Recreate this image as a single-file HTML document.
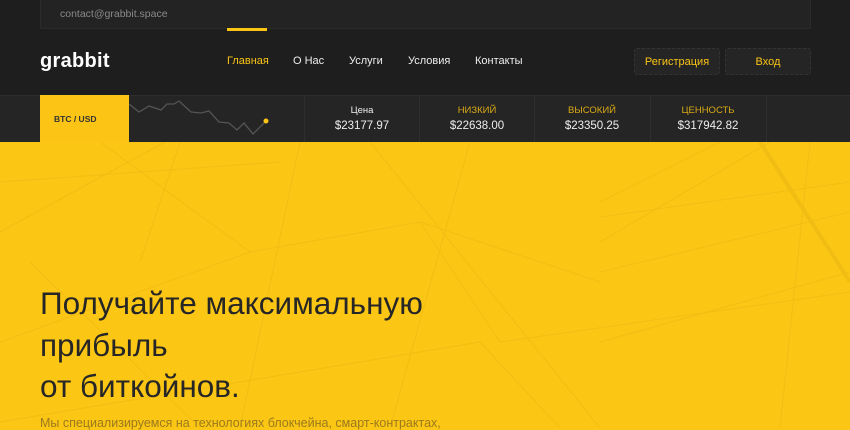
<!DOCTYPE html>
<html><head><meta charset="utf-8"><style>
*{margin:0;padding:0;box-sizing:border-box}
html,body{background:#fcc615}
body{width:850px;height:428px;overflow:hidden;font-family:"Liberation Sans",sans-serif;position:relative}
.dark{position:absolute;left:0;top:0;width:850px;height:142px;background:#1e1e1e}
.top{position:absolute;left:40px;top:0;width:771px;height:29px;background:#232323;border:1px solid #2b2b2b;border-top:none}
.top span{position:absolute;left:19px;top:8px;font-size:10.5px;color:#8a8a8a}
.ul{position:absolute;left:227px;top:28px;width:40px;height:3px;background:#fcc515}
.logo{position:absolute;left:40px;top:50px;font-size:20px;font-weight:bold;color:#fff;letter-spacing:.3px}
.nav{position:absolute;top:55px;font-size:11px;color:#eee}
.btn{position:absolute;top:48px;height:27px;background:#252525;border:1px dashed #333;border-radius:3px;color:#fcc515;font-size:11px;text-align:center;line-height:26px}
.tick{position:absolute;left:0;top:95px;width:850px;height:47px;background:#252525;border-top:1px solid #2e2e2e}
.btc{position:absolute;left:40px;top:95px;width:89px;height:47px;background:#fcc515;font-size:8.5px;font-weight:bold;color:#333;padding:19px 0 0 14px}
.cell{position:absolute;top:96px;height:46px;border-left:1px solid #2f2f2f;text-align:center;width:115px}
.cell .l{font-size:9.5px;margin-top:9px;color:#eee}
.cell .l.y{color:#d9a915}
.cell .v{font-size:11.5px;color:#eee;margin-top:4px}
.hero{position:absolute;left:0;top:142px;width:850px;height:286px;background:#fcc615;overflow:hidden}
h1{position:absolute;left:40px;top:283px;font-size:31.5px;font-weight:normal;line-height:41.5px;color:#262626;white-space:nowrap}
.sub{position:absolute;left:40px;top:416px;font-size:12.5px;color:#9a7a1c;white-space:nowrap}
</style></head><body>
<div class="dark"></div>
<div class="top"><span>contact@grabbit.space</span></div>
<div class="ul"></div>
<div class="logo">grabbit</div>
<div class="nav" style="left:227px;color:#fcc515">Главная</div>
<div class="nav" style="left:293px">О Нас</div>
<div class="nav" style="left:349px">Услуги</div>
<div class="nav" style="left:408px">Условия</div>
<div class="nav" style="left:475px">Контакты</div>
<div class="btn" style="left:634px;width:86px">Регистрация</div>
<div class="btn" style="left:725px;width:86px">Вход</div>
<div class="tick"></div>
<div class="btc">BTC / USD</div>
<svg style="position:absolute;left:129px;top:96px" width="145" height="46"><polyline points="0,8 10,16 20,10 32,14 38,8 45,8 50,5 62,16 72,17 80,15 90,26 100,27 108,34 115,27 124,38 137,25" fill="none" stroke="#555" stroke-width="1.3"/><circle cx="137" cy="25" r="2.5" fill="#fcc515"/></svg>
<div class="cell" style="left:304px"><div class="l">Цена</div><div class="v">$23177.97</div></div>
<div class="cell" style="left:419px"><div class="l y">НИЗКИЙ</div><div class="v">$22638.00</div></div>
<div class="cell" style="left:534px"><div class="l y">ВЫСОКИЙ</div><div class="v">$23350.25</div></div>
<div class="cell" style="left:650px"><div class="l y">ЦЕННОСТЬ</div><div class="v">$317942.82</div></div>
<div class="cell" style="left:766px;width:1px"></div>
<div class="hero">
<svg width="850" height="286" style="position:absolute;left:0;top:0" stroke="#eab512" fill="none" stroke-width="1" opacity=".5">
<line x1="165" y1="0" x2="0" y2="90"/><line x1="300" y1="0" x2="240" y2="286"/><line x1="370" y1="0" x2="600" y2="286"/>
<line x1="470" y1="0" x2="390" y2="286"/><line x1="770" y1="0" x2="600" y2="100"/><line x1="720" y1="0" x2="600" y2="60"/>
<line x1="760" y1="0" x2="850" y2="140" stroke-width="4"/><line x1="810" y1="0" x2="780" y2="286"/>
<line x1="600" y1="75" x2="850" y2="40"/><line x1="600" y1="130" x2="850" y2="70"/><line x1="600" y1="200" x2="850" y2="130"/>
<line x1="0" y1="40" x2="280" y2="20"/><line x1="100" y1="0" x2="250" y2="110"/><line x1="250" y1="110" x2="420" y2="80"/>
<line x1="250" y1="110" x2="0" y2="200"/><line x1="420" y1="80" x2="600" y2="140"/><line x1="420" y1="80" x2="500" y2="200"/>
<line x1="500" y1="200" x2="850" y2="150"/><line x1="0" y1="280" x2="480" y2="200"/><line x1="480" y1="200" x2="560" y2="286"/>
<line x1="180" y1="0" x2="140" y2="120"/><line x1="30" y1="120" x2="200" y2="286"/>
</svg>
</div>
<h1>Получайте максимальную<br>прибыль<br>от биткойнов.</h1>
<div class="sub">Мы специализируемся на технологиях блокчейна, смарт-контрактах,</div>
</body></html>
